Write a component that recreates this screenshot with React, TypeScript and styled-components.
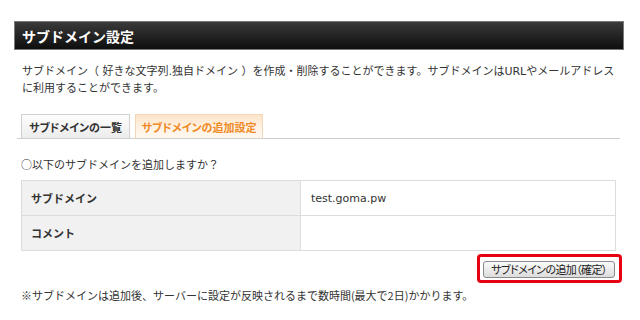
import React from "react";
import styled, { createGlobalStyle } from "styled-components";

const Global = createGlobalStyle`
  html, body { margin: 0; padding: 0; background: #fff; }
  body {
    font-family: "DejaVu Sans", "Noto Sans CJK JP", sans-serif;
    color: #333;
    font-size: 11px;
  }
`;

const Page = styled.div`
  width: 610px;
  padding: 21px 0 0 14px;
  display: flex;
  flex-direction: column;
`;

const TitleBar = styled.h1`
  margin: 0;
  height: 27px;
  border: 1px solid #7a7a7a;
  background: linear-gradient(#3a3a3a, #0e0e0e);
  color: #fff;
  font-size: 14px;
  font-weight: bold;
  font-family: "Noto Sans CJK JP", sans-serif;
  display: flex;
  align-items: center;
  padding-left: 7px;
`;

const Description = styled.p`
  margin: 13px 0 0 8px;
  line-height: 17px;
  font-size: 11px;
`;

const TabBar = styled.div`
  margin: 16px 4px 0 3px;
  padding-left: 4px;
  display: flex;
  gap: 5px;
  border-bottom: 1px solid #cfcfcf;
  height: 25px;
`;

const Tab = styled.div<{ $active?: boolean }>`
  height: 24px;
  box-sizing: border-box;
  border: 1px solid ${(p) => (p.$active ? "#f1d6b8" : "#d0d0d0")};
  border-bottom: none;
  background: ${(p) =>
    p.$active
      ? "linear-gradient(#fde3c9, #fff3e6 60%, #fff8f0)"
      : "linear-gradient(#fdfdfd, #ececec)"};
  color: ${(p) => (p.$active ? "#f08a24" : "#333")};
  font-weight: bold;
  font-size: 11px;
  font-family: "Noto Sans CJK JP", sans-serif;
  font-feature-settings: "palt";
  display: flex;
  align-items: center;
  justify-content: center;
  width: ${(p) => (p.$active ? 128 : 109)}px;
  margin-top: 1px;
`;

const Question = styled.p`
  margin: 17px 0 0 7px;
  line-height: 17px;
  font-family: "Noto Sans CJK JP", sans-serif;
`;

const Table = styled.table`
  margin: 7px 0 0 7px;
  width: 595px;
  border-collapse: collapse;
`;

const HeadCell = styled.th`
  width: 269px;
  height: 34px;
  border: 1px solid #dcdcdc;
  background: #f1f1f1;
  text-align: left;
  padding: 0 0 0 9px;
  font-weight: bold;
  font-size: 11px;
  font-family: "Noto Sans CJK JP", sans-serif;
`;

const ValueCell = styled.td`
  border: 1px solid #dcdcdc;
  padding: 0 0 0 10px;
  font-size: 11px;
`;

const ActionRow = styled.div`
  display: flex;
  justify-content: flex-end;
  margin: 3px 2px 0 0;
`;

const Highlight = styled.div`
  border: 3px solid #e60012;
  border-radius: 4px;
  padding: 4px 4px 2px 3px;
  display: flex;
`;

const Button = styled.button`
  width: 132px;
  height: 17px;
  padding: 0;
  border: 1px solid #8a8a8a;
  border-radius: 3px;
  background: linear-gradient(#fbfbfb, #dcdcdc);
  color: #222;
  font-size: 11px;
  font-family: "Noto Sans CJK JP", sans-serif;
  font-feature-settings: "palt";
  letter-spacing: -0.6px;
  line-height: 15px;
`;

const Note = styled.p`
  margin: 4px 0 0 7px;
  line-height: 17px;
  font-family: "Noto Sans CJK JP", sans-serif;
`;

export default function App() {
  return (
    <>
      <Global />
      <Page>
        <TitleBar>サブドメイン設定</TitleBar>
        <Description>
          サブドメイン（ 好きな文字列.独自ドメイン ）を作成・削除することができます。サブドメインはURLやメールアドレス
          <br />
          に利用することができます。
        </Description>
        <TabBar>
          <Tab>サブドメインの一覧</Tab>
          <Tab $active>サブドメインの追加設定</Tab>
        </TabBar>
        <Question>○以下のサブドメインを追加しますか？</Question>
        <Table>
          <tbody>
            <tr>
              <HeadCell>サブドメイン</HeadCell>
              <ValueCell>test.goma.pw</ValueCell>
            </tr>
            <tr>
              <HeadCell>コメント</HeadCell>
              <ValueCell></ValueCell>
            </tr>
          </tbody>
        </Table>
        <ActionRow>
          <Highlight>
            <Button>サブドメインの追加（確定）</Button>
          </Highlight>
        </ActionRow>
        <Note>※サブドメインは追加後、サーバーに設定が反映されるまで数時間(最大で2日)かかります。</Note>
      </Page>
    </>
  );
}
